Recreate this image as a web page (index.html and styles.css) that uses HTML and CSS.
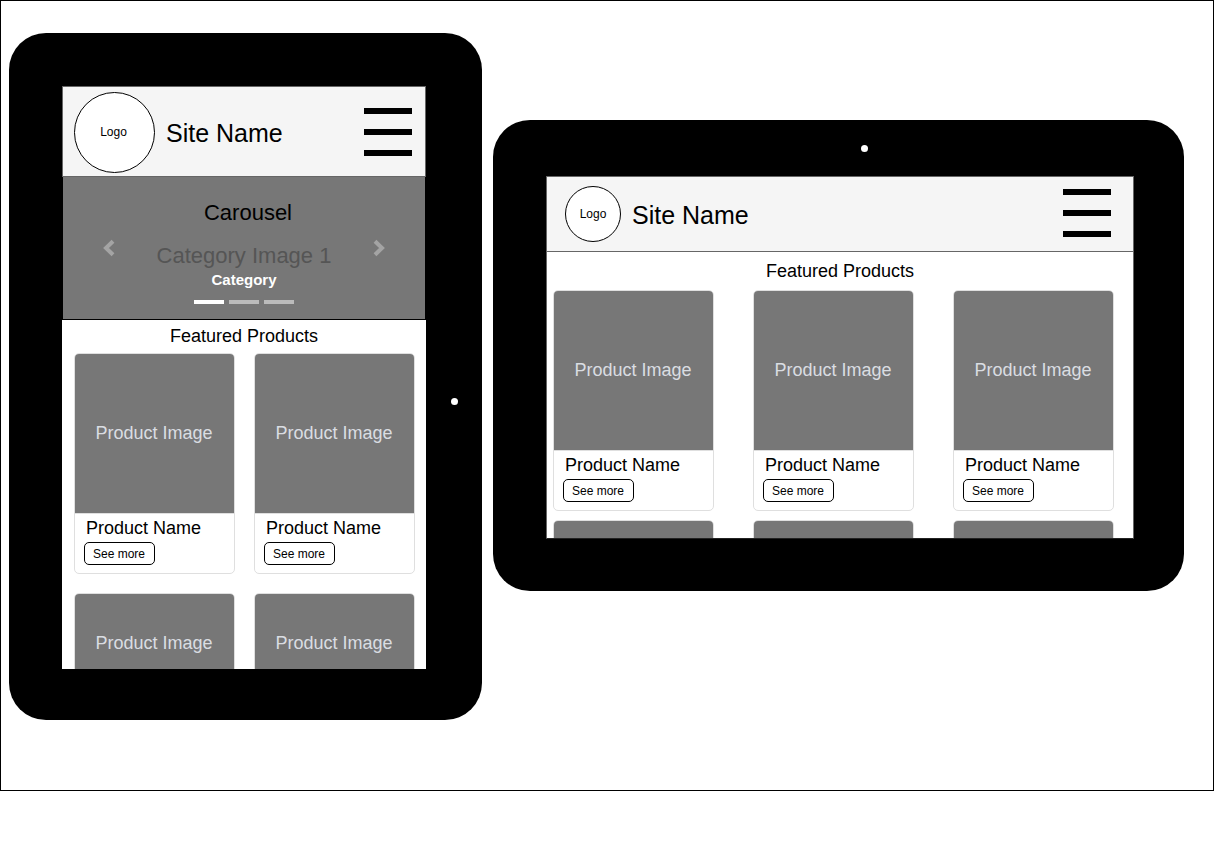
FILE: index.html
```
<!DOCTYPE html>
<html lang="en">
<head>
<meta charset="utf-8">
<title>Site Name tablet wireframes</title>
<link rel="stylesheet" href="styles.css">
</head>
<body>
<main class="board">
  <section class="device device-portrait" aria-label="Tablet, portrait">
    <div class="screen">
      <header class="site-header">
        <div class="logo">Logo</div>
        <div class="site-name">Site Name</div>
        <button class="menu-button" type="button" aria-label="Menu"><span class="bar"></span><span class="bar"></span><span class="bar"></span></button>
      </header>
      <div class="carousel">
        <button class="carousel-arrow" type="button" aria-label="Previous">
          <svg viewBox="0 0 12 18" width="12" height="18"><path d="M10 2.2 3 9l7 6.8" fill="none" stroke="#a4a4a4" stroke-width="4"/></svg>
        </button>
        <div class="carousel-content">
          <div class="carousel-title">Carousel</div>
          <div class="carousel-image">Category Image 1</div>
          <div class="carousel-caption">Category</div>
          <div class="indicators">
            <button class="indicator active" type="button" aria-label="Slide 1"></button>
            <button class="indicator" type="button" aria-label="Slide 2"></button>
            <button class="indicator" type="button" aria-label="Slide 3"></button>
          </div>
        </div>
        <button class="carousel-arrow" type="button" aria-label="Next">
          <svg viewBox="0 0 12 18" width="12" height="18"><path d="M2 2.2 9 9l-7 6.8" fill="none" stroke="#a4a4a4" stroke-width="4"/></svg>
        </button>
      </div>
      <h2 class="featured">Featured Products</h2>
      <div class="products">
        <article class="card"><div class="card-image">Product Image</div><div class="card-body"><h3 class="card-name">Product Name</h3><button class="more" type="button">See more</button></div></article>
        <article class="card"><div class="card-image">Product Image</div><div class="card-body"><h3 class="card-name">Product Name</h3><button class="more" type="button">See more</button></div></article>
        <article class="card"><div class="card-image short">Product Image</div></article>
        <article class="card"><div class="card-image short">Product Image</div></article>
      </div>
    </div>
    <span class="camera"></span>
  </section>

  <section class="device device-landscape" aria-label="Tablet, landscape">
    <span class="camera"></span>
    <div class="screen">
      <header class="site-header">
        <div class="logo">Logo</div>
        <div class="site-name">Site Name</div>
        <button class="menu-button" type="button" aria-label="Menu"><span class="bar"></span><span class="bar"></span><span class="bar"></span></button>
      </header>
      <h2 class="featured">Featured Products</h2>
      <div class="products">
        <article class="card"><div class="card-image">Product Image</div><div class="card-body"><h3 class="card-name">Product Name</h3><button class="more" type="button">See more</button></div></article>
        <article class="card"><div class="card-image">Product Image</div><div class="card-body"><h3 class="card-name">Product Name</h3><button class="more" type="button">See more</button></div></article>
        <article class="card"><div class="card-image">Product Image</div><div class="card-body"><h3 class="card-name">Product Name</h3><button class="more" type="button">See more</button></div></article>
        <article class="card"><div class="card-image short"></div></article>
        <article class="card"><div class="card-image short"></div></article>
        <article class="card"><div class="card-image short"></div></article>
      </div>
    </div>
  </section>
</main>
</body>
</html>
```

FILE: styles.css
```
* {
  box-sizing: border-box;
}

body {
  margin: 0;
  background: #fff;
  color: #000;
  font-family: "Liberation Sans", Arial, sans-serif;
}

button {
  margin: 0;
  padding: 0;
  border: 0;
  background: none;
  color: inherit;
  font: inherit;
}

h2,
h3 {
  margin: 0;
  font-weight: normal;
}

.board {
  display: grid;
  grid-template-columns: minmax(0, 473fr) minmax(0, 691fr);
  column-gap: 11px;
  align-items: start;
  padding: 32px 29px 70px 8px;
  border: 1px solid #000;
}

/* Tablet bodies */
.device {
  display: grid;
  border-radius: 37px;
  background: #000;
}

.device-portrait {
  grid-template-columns: minmax(0, 1fr) 56px;
  padding: 53px 0 51px 53px;
}

.device-landscape {
  grid-template-rows: 56px auto;
  margin-top: 87px;
  padding: 0 50px 52px 53px;
}

.camera {
  width: 7px;
  height: 7px;
  border-radius: 50%;
  background: #fff;
  place-self: center;
}

.device-portrait .camera {
  margin-top: 48px;
}

.device-landscape .camera {
  margin-left: 48px;
}

.screen {
  overflow: hidden;
  background: #fff;
}

.device-portrait .screen {
  aspect-ratio: 364 / 583;
}

.device-landscape .screen {
  aspect-ratio: 588 / 363;
  border: 1px solid #666;
  border-top: 0;
  border-bottom-color: #222;
}

/* Header */
.site-header {
  display: flex;
  align-items: center;
  border: 1px solid #666;
  background: #f5f5f5;
}

.device-portrait .site-header {
  padding: 5px 13px 3px 11px;
}

.device-landscape .site-header {
  margin: 0 -1px;
  padding: 9px 22px 9px 18px;
}

.logo {
  display: grid;
  place-items: center;
  flex: none;
  width: 81px;
  height: 81px;
  padding: 0 2px 2px 0;
  border: 1px solid #000;
  border-radius: 50%;
  background: #fff;
  font-size: 12px;
}

.device-landscape .logo {
  width: 56px;
  height: 56px;
  padding: 0;
}

.site-name {
  padding-top: 1px;
  margin-left: 11px;
  font-size: 25px;
  line-height: 28px;
}

.menu-button {
  display: grid;
  gap: 15px;
  width: 48px;
  margin-left: auto;
  padding-bottom: 2px;
}

.bar {
  height: 6px;
  background: #000;
}

/* Carousel */
.carousel {
  display: flex;
  justify-content: space-between;
  padding: 22px 40px 15px;
  border: 1px solid #000;
  border-top: 0;
  background: #777;
}

.carousel-arrow {
  display: grid;
  place-items: center;
  width: 12px;
  padding-bottom: 8px;
}

.carousel-content {
  text-align: center;
}

.carousel-title {
  padding-left: 8px;
  font-size: 22px;
  line-height: 28px;
}

.carousel-image {
  margin-top: 15px;
  color: #555;
  font-size: 22px;
  line-height: 28px;
}

.carousel-caption {
  color: #fff;
  font-size: 15px;
  font-weight: bold;
  line-height: 20px;
}

.indicators {
  display: flex;
  justify-content: center;
  gap: 5px;
  margin-top: 10px;
}

.indicator {
  width: 30px;
  height: 4px;
  background: #bbb;
}

.indicator.active {
  background: #fff;
}

/* Products */
.featured {
  font-size: 18px;
  line-height: 20px;
  text-align: center;
}

.device-portrait .featured {
  padding: 6px 0 7px;
}

.device-landscape .featured {
  padding: 9px 0 9px;
}

.products {
  display: grid;
}

.device-portrait .products {
  grid-template-columns: 1fr 1fr;
  gap: 19px;
  padding: 0 11px 0 12px;
}

.device-landscape .products {
  grid-template-columns: 1fr 1fr 1fr;
  gap: 9px 39px;
  padding: 0 19px 0 6px;
}

.card {
  overflow: hidden;
  border: 1px solid #dfdfdf;
  border-radius: 5px;
}

.card-image {
  display: grid;
  place-items: center;
  height: 159px;
  padding-right: 1px;
  background: #777;
  color: #dadde2;
  font-size: 18px;
}

.card-image.short {
  height: 99px;
}

.card-body {
  padding: 4px 9px 8px;
  border-top: 1px solid #dfdfdf;
}

.card-name {
  padding-left: 2px;
  font-size: 18px;
  line-height: 20px;
}

.more {
  display: block;
  margin-top: 4px;
  padding: 1px 9px 0 8px;
  border: 1px solid #000;
  border-radius: 5px;
  font-size: 12px;
  line-height: 20px;
}
```
